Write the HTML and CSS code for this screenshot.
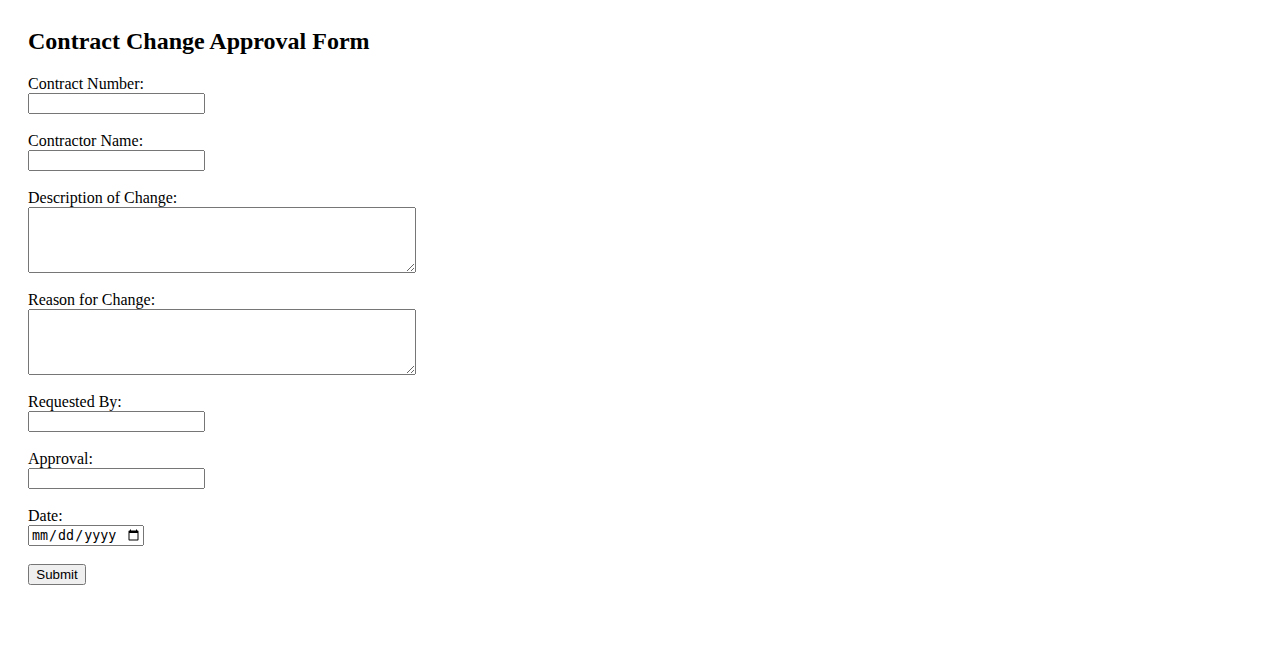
FILE: index.html
```html
<!DOCTYPE html>
<html>
<head>
<meta charset="utf-8">
<title>Contract Change Approval Form</title>
<link rel="stylesheet" href="styles.css">
</head>
<body>
<div class="page">
<h2 class="title">Contract Change Approval Form</h2>
<form class="form">
<label for="cn">Contract Number:</label><br>
<input class="text" type="text" id="cn"><br><br>
<label for="name">Contractor Name:</label><br>
<input class="text" type="text" id="name"><br><br>
<label for="desc">Description of Change:</label><br>
<textarea class="area" id="desc"></textarea><br><br>
<label for="reason">Reason for Change:</label><br>
<textarea class="area" id="reason"></textarea><br><br>
<label for="req">Requested By:</label><br>
<input class="text" type="text" id="req"><br><br>
<label for="appr">Approval:</label><br>
<input class="text" type="text" id="appr"><br><br>
<label for="date">Date:</label><br>
<input class="date" type="date" id="date"><br><br>
<input class="submit" type="submit" value="Submit">
</form>
</div>
</body>
</html>
```
FILE: styles.css
```css
body {
  margin: 0;
  font-family: "Liberation Serif", "Times New Roman", serif;
  font-size: 16px;
  color: #000;
  background: #fff;
}
.page {
  padding: 28px;
}
.title {
  margin: 0 0 0.83em 0;
  font-size: 24px;
  font-weight: bold;
}
.form {
  margin: 0;
}
.text {
  width: 177px;
  height: 21px;
  box-sizing: border-box;
}
.area {
  width: 388px;
  height: 66px;
  box-sizing: border-box;
  vertical-align: bottom;
}
.date {
  width: 116px;
  height: 21px;
  box-sizing: border-box;
}
.submit {
  font-family: "Liberation Sans", Arial, sans-serif;
  width: 58px;
  height: 21px;
  box-sizing: border-box;
}
```
